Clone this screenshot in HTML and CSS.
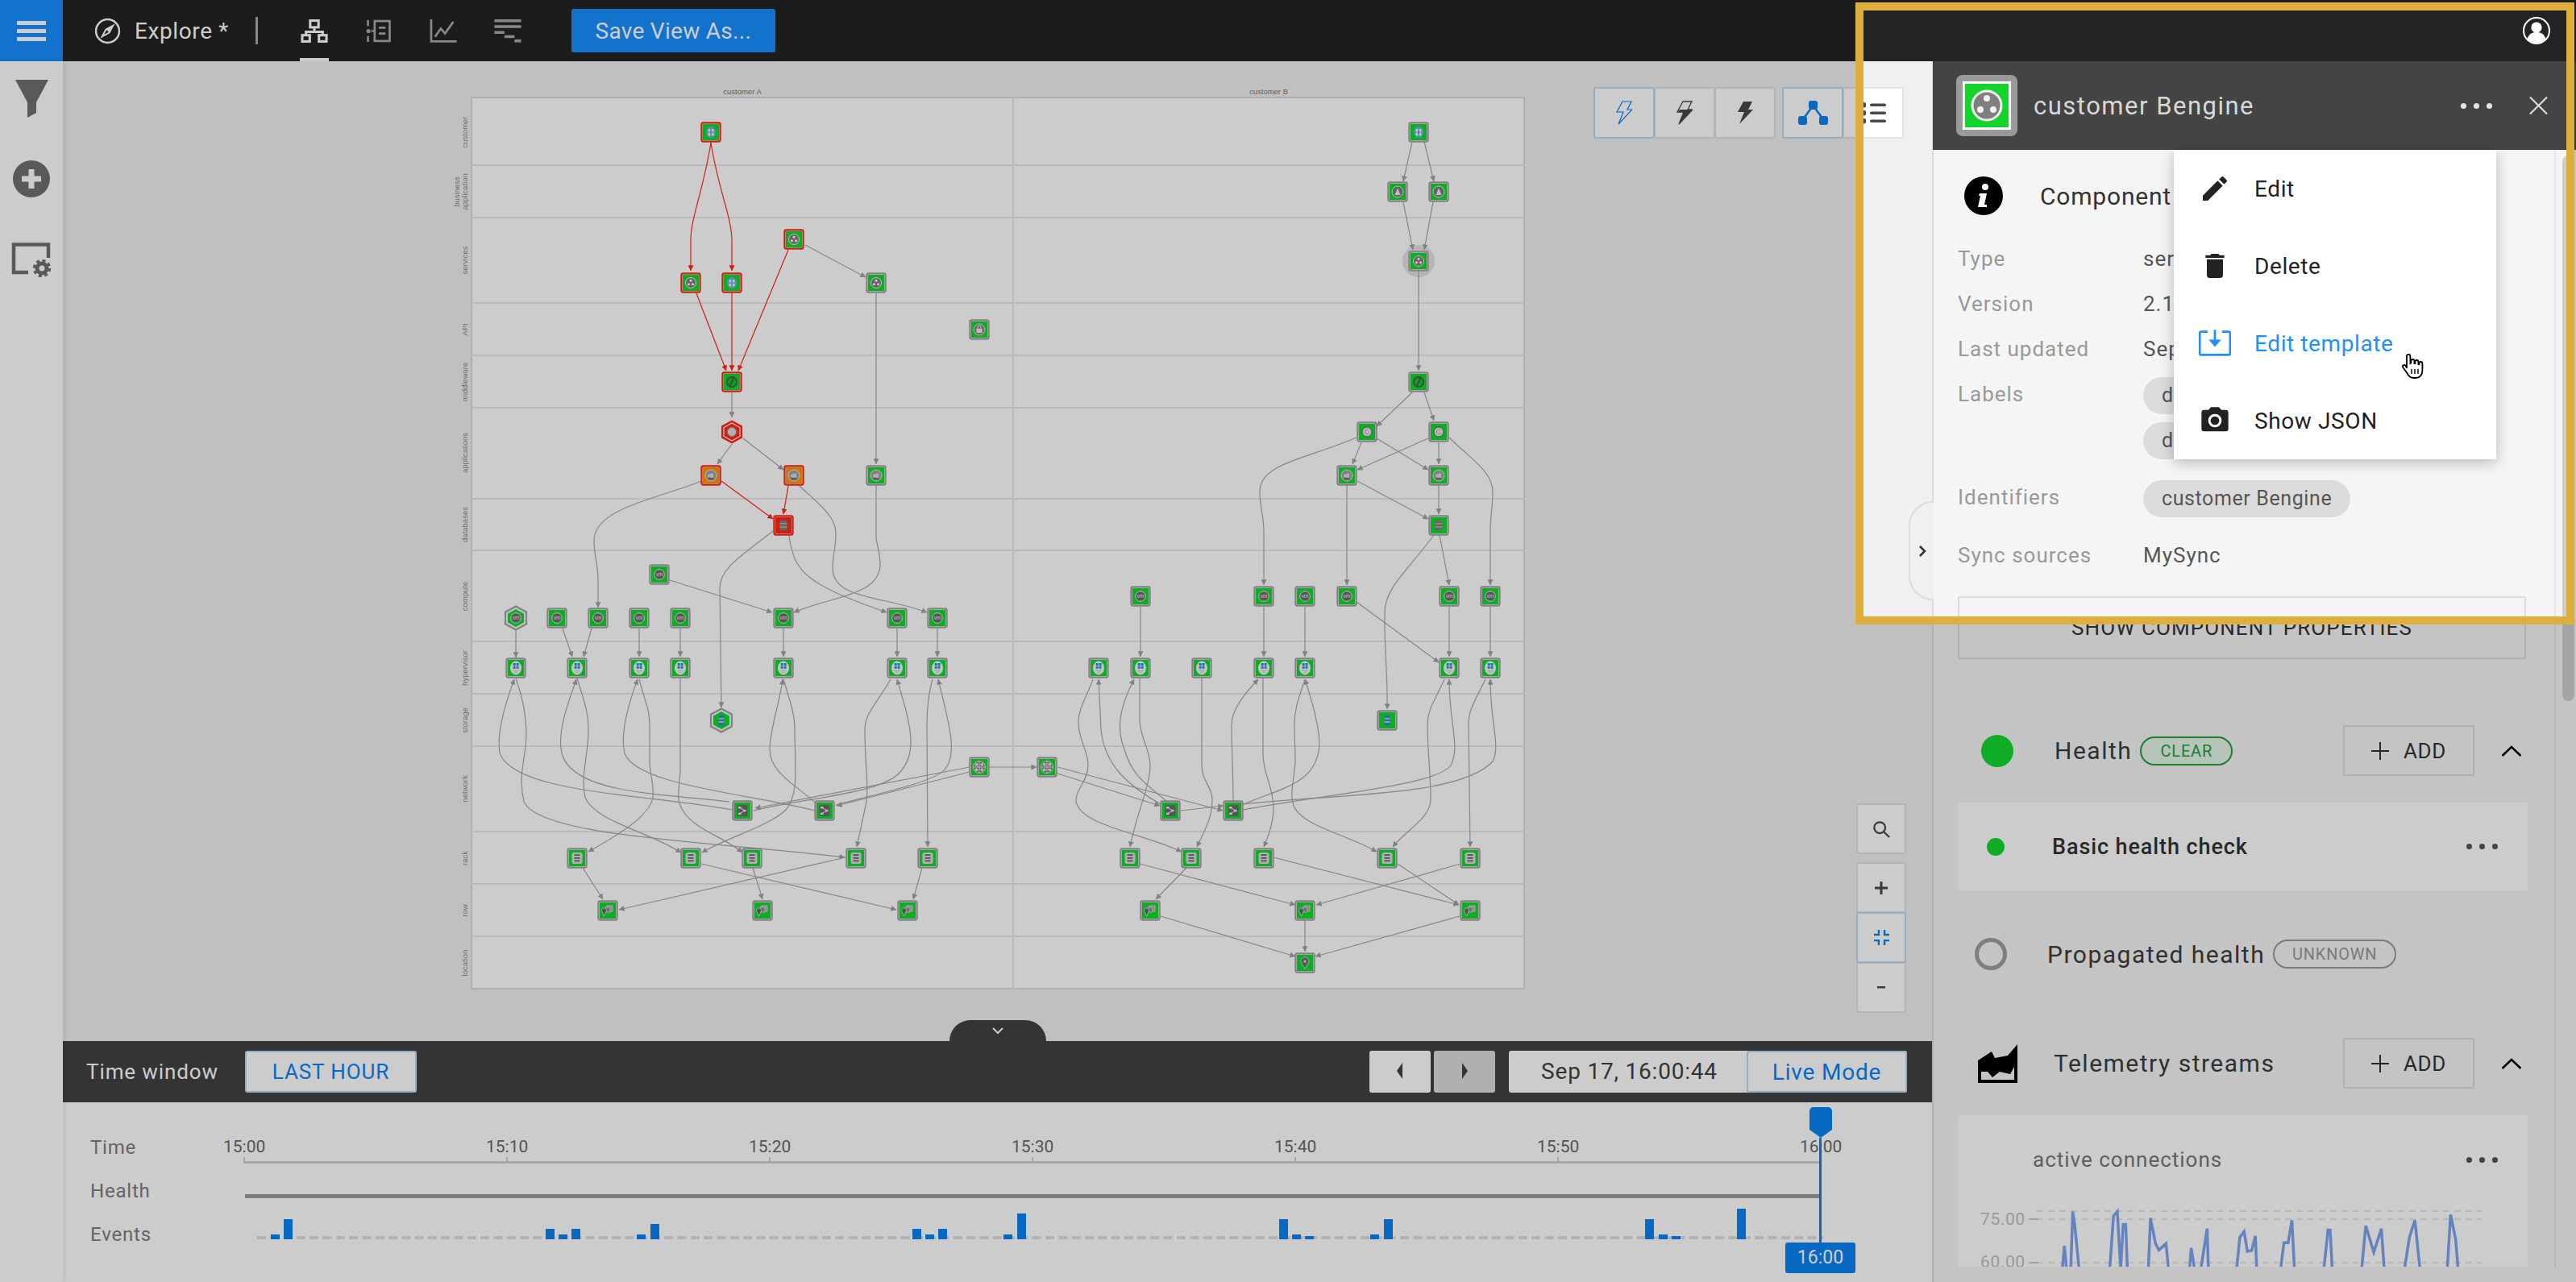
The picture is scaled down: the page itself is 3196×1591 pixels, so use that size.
FILE: index.html
```html
<!DOCTYPE html>
<html lang="en">
<head>
    <meta charset="UTF-8">
    <title>Explore - customer Bengine</title>
    <link rel="stylesheet" href="styles.css">
</head>
<body>
<div class="app">
    <header class="topbar">
        <button class="menu-btn"><span></span><span></span><span></span></button>
        <svg class="compass" viewBox="0 0 32 32"><circle cx="16" cy="16" r="14" fill="none" stroke="#fff" stroke-width="2.4"/><path d="M22.5 9.5L18 18l-8.5 4.5L14 14z" fill="none" stroke="#fff" stroke-width="2"/><path d="M22.5 9.5L18 18l-4-4z" fill="#fff"/></svg>
        <span class="view-name">Explore *</span>
        <span class="view-sep"></span>
        <nav class="view-tabs">
            <a class="tab active"><svg viewBox="0 0 32 28" fill="none" stroke="currentColor" stroke-width="3"><rect x="11" y="1.5" width="10" height="8"/><path d="M16 10v5M6 19v-4h20v4"/><rect x="1.5" y="19" width="9" height="7.5"/><rect x="21.5" y="19" width="9" height="7.5"/></svg></a>
            <a class="tab"><svg viewBox="0 0 30 28" fill="none" stroke="currentColor" stroke-width="2.6"><path d="M2 1v7M2 20v7"/><circle cx="2.5" cy="14" r="2.5" fill="currentColor" stroke="none"/><path d="M10 2h18v24H10z"/><path d="M10 14H6M15 10h8M15 17h8"/></svg></a>
            <a class="tab"><svg viewBox="0 0 32 28" fill="none" stroke="currentColor" stroke-width="2.6"><path d="M1.5 0v26.5H32"/><path d="M6 21l7-10 5 6L28 3"/></svg></a>
            <a class="tab"><svg viewBox="0 0 32 28" fill="currentColor"><rect width="32" height="3.4"/><rect y="7" width="32" height="3.4"/><rect y="14" width="12" height="3.4"/><rect x="12" y="19" width="12" height="3.4"/><rect x="24" y="24" width="8" height="3.6"/></svg></a>
        </nav>
        <button class="save-btn">Save View As...</button>
        <svg class="avatar" viewBox="0 0 34 34"><circle cx="17" cy="17" r="16" fill="none" stroke="#fff" stroke-width="2"/><circle cx="17" cy="13" r="6.6" fill="#fff"/><path d="M5.5 28c1.5-7 6-9 11.5-9s10 2 11.5 9a16 16 0 0 1-23 0z" fill="#fff"/></svg>
    </header>

    <div class="main">
        <aside class="rail">
            <svg class="rail-funnel" viewBox="17 99 41 47"><path d="M17 99h41L43 127v13l-11 6v-19z" fill="#707070"/></svg>
            <svg class="rail-add" viewBox="0 0 46 46"><circle cx="23" cy="23" r="23" fill="#707070"/><path d="M23 11v24M11 23h24" stroke="#fff" stroke-width="7"/></svg>
            <svg class="rail-view" viewBox="0 0 50 44"><path d="M21 38H3V3.5h43V20" fill="none" stroke="#707070" stroke-width="4.5"/><circle cx="38" cy="33" r="6" fill="none" stroke="#707070" stroke-width="5"/><circle cx="38" cy="33" r="9.5" fill="none" stroke="#707070" stroke-width="3.5" stroke-dasharray="4 3.5"/></svg>
        </aside>

        <section class="center">
            <div class="stage">
                <svg class="graph" viewBox="78 76 2319 1216">
                    <defs>
                        <marker id="arr" viewBox="0 0 10 10" refX="9.5" refY="5" markerWidth="7" markerHeight="7" markerUnits="userSpaceOnUse" orient="auto"><path d="M0 0L10 5L0 10z" fill="#a2a2a2"/></marker>
                        <marker id="arr-red" viewBox="0 0 10 10" refX="9.5" refY="5" markerWidth="7" markerHeight="7" markerUnits="userSpaceOnUse" orient="auto"><path d="M0 0L10 5L0 10z" fill="#ff2a15"/></marker>

                        <g id="box-g"><rect x="-11.6" y="-11.6" width="23.2" height="23.2" rx="2" fill="#f6f6f6" stroke="#a4a4a4" stroke-width="2.2"/><rect x="-10" y="-10" width="20" height="20" fill="#12d92f"/></g>
                        <g id="box-r"><rect x="-11.6" y="-11.6" width="23.2" height="23.2" rx="2" fill="#f6f6f6" stroke="#ff2a15" stroke-width="2.2"/><rect x="-10" y="-10" width="20" height="20" fill="#12d92f"/></g>
                        <g id="box-o"><rect x="-11.6" y="-11.6" width="23.2" height="23.2" rx="2" fill="#f6f6f6" stroke="#ff2a15" stroke-width="2.2"/><rect x="-10" y="-10" width="20" height="20" fill="#ff9410"/></g>
                        <g id="box-x"><rect x="-11.6" y="-11.6" width="23.2" height="23.2" rx="2" fill="#f6f6f6" stroke="#ff2a15" stroke-width="2.2"/><rect x="-10" y="-10" width="20" height="20" fill="#ff2a15"/></g>
                        <path id="hexa" d="M0-14.5L13 -7.5V7.5L0 14.5L-13 7.5V-7.5z"/>
                        <path id="hexb" d="M0-11L10 -5.5V5.5L0 11L-10 5.5V-5.5z"/>

                        <g id="i-dots"><circle r="6.5" fill="#808080" stroke="#f0f0f0"/><circle cy="-2.8" r="1.5" fill="#fff"/><circle cx="-2.6" cy="1.8" r="1.5" fill="#fff"/><circle cx="2.6" cy="1.8" r="1.5" fill="#fff"/></g>
                        <g id="i-globe"><ellipse rx="6" ry="7" fill="#6db4e2"/><path d="M-3.5-4h2.5v3.5h-2.5zM1-4h2.5v3.5H1zM-3.5 1h2.5v3.5h-2.5zM1 1h2.5v3.5H1z" fill="#eef4f8"/></g>
                        <g id="i-a"><circle r="7" fill="#7d7d7d" stroke="#e8e8e8"/><path d="M0-4.5L3.5 4h-7z" fill="#eee"/></g>
                        <g id="i-lock"><circle r="7" fill="#8a8a8a" stroke="#e0e0e0"/><rect x="-3.5" y="-1" width="7" height="5" fill="#eee"/><path d="M-2-1v-2a2 2 0 0 1 4 0v2" fill="none" stroke="#eee"/></g>
                        <g id="i-compass"><circle r="6.2" fill="#12c42c" stroke="#5a5a5a" stroke-width="2"/><path d="M2.5-5.5L-2.5 5.5" stroke="#444" stroke-width="1.2"/></g>
                        <g id="i-cog"><circle r="6" fill="#e4e4e4" stroke="#666"/><path d="M1.5-3a3 3 0 1 0 1.5 4.5" fill="none" stroke="#aaa"/></g>
                        <g id="i-cam"><circle r="7" fill="#a2a2a2" stroke="#e8e8e8"/><path d="M-4-1L3-3V3l-7-1z" fill="#dadada"/><ellipse cy="4.2" rx="4" ry="1.3" fill="#707070"/></g>
                        <g id="i-db"><rect x="-4.5" y="-6.5" width="9" height="13" rx="3" fill="#808080"/><path d="M-4.5-2.2H4.5M-4.5 2H4.5" stroke="#ccc"/></g>
                        <g id="i-dbc"><rect x="-3.5" y="-6.5" width="7" height="13" rx="2.5" fill="#2f8fc4"/><path d="M-3.5-2.2H3.5M-3.5 2H3.5" stroke="#ddd" stroke-width="1.3"/></g>
                        <g id="i-vm"><circle r="6.3" fill="#6c6c6c" stroke="#e8e8e8"/><text class="vm-text" y="2.2" text-anchor="middle">vm</text></g>
                        <g id="i-win"><ellipse rx="7" ry="8.5" fill="#f6f6f6"/><path d="M-3.3-6h3v3h-3zM.6-6h3v3h-3zM-3.3-2.2h3v3h-3zM.6-2.2h3v3h-3z" fill="#1796de"/><path d="M-4 3.3H4M-2 5.3H2" stroke="#bbb" stroke-width=".8"/></g>
                        <g id="i-net"><circle r="7.5" fill="#808080" stroke="#e4e4e4"/><path d="M0-7.5V7.5M-7.5 0H7.5" stroke="#e4e4e4"/><circle cx="-3.3" cy="-3.3" r="1.9" fill="#e4e4e4"/><circle cx="3.3" cy="-3.3" r="1.9" fill="#e4e4e4"/><circle cx="-3.3" cy="3.3" r="1.9" fill="#e4e4e4"/><circle cx="3.3" cy="3.3" r="1.9" fill="#e4e4e4"/></g>
                        <g id="i-share"><rect x="-6.5" y="-7" width="13" height="14" rx="2" fill="#6c6c6c"/><path d="M-3-3.5L3 0L-3 3.5" fill="none" stroke="#eee"/><rect x="-5" y="-5" width="3.5" height="2.5" fill="#eee"/><rect x="1" y="-1.2" width="3.5" height="2.5" fill="#eee"/><rect x="-5" y="2.6" width="3.5" height="2.5" fill="#eee"/></g>
                        <g id="i-rack"><rect x="-6.5" y="-7" width="13" height="14" rx="2.5" fill="#dcdcdc"/><path d="M-3.5-3.8H3.5M-3.5-.2H3.5M-3.5 3.4H3.5" stroke="#666" stroke-width="1.7"/></g>
                        <g id="i-row"><path d="M-1-6h7V1h-7z" fill="#a8a8a8" stroke="#e4e4e4" stroke-width=".8"/><path d="M-3-4h6V2h-6z" fill="#8c8c8c" stroke="#e4e4e4" stroke-width=".8"/><path d="M-4.5 7L-7 1.5a3 3 0 1 1 5 0z" fill="#666" stroke="#e4e4e4" stroke-width=".8"/></g>
                        <g id="i-loc"><path d="M0 7.5L-4.5 0a5 5 0 1 1 9 0z" fill="#707070" stroke="#e4e4e4" stroke-width=".8"/><circle cy="-2" r="1.6" fill="#e4e4e4"/></g>

                        <g id="n-dots"><use href="#box-g"/><use href="#i-dots"/></g>
                        <g id="n-dots-r"><use href="#box-r"/><use href="#i-dots"/></g>
                        <g id="n-globe"><use href="#box-g"/><use href="#i-globe"/></g>
                        <g id="n-globe-r"><use href="#box-r"/><use href="#i-globe"/></g>
                        <g id="n-a"><use href="#box-g"/><use href="#i-a"/></g>
                        <g id="n-lock"><use href="#box-g"/><use href="#i-lock"/></g>
                        <g id="n-compass"><use href="#box-g"/><use href="#i-compass"/></g>
                        <g id="n-compass-r"><use href="#box-r"/><use href="#i-compass"/></g>
                        <g id="n-cog"><use href="#box-g"/><use href="#i-cog"/></g>
                        <g id="n-cam"><use href="#box-g"/><use href="#i-cam"/></g>
                        <g id="n-cam-o"><use href="#box-o"/><use href="#i-cam"/></g>
                        <g id="n-db"><use href="#box-g"/><use href="#i-db"/></g>
                        <g id="n-db-x"><use href="#box-x"/><use href="#i-db"/></g>
                        <g id="n-dbc"><use href="#box-g"/><use href="#i-dbc"/></g>
                        <g id="n-vm"><use href="#box-g"/><use href="#i-vm"/></g>
                        <g id="n-win"><use href="#box-g"/><use href="#i-win"/></g>
                        <g id="n-net"><use href="#box-g"/><use href="#i-net"/></g>
                        <g id="n-share"><use href="#box-g"/><use href="#i-share"/></g>
                        <g id="n-rack"><use href="#box-g"/><use href="#i-rack"/></g>
                        <g id="n-row"><use href="#box-g"/><use href="#i-row"/></g>
                        <g id="n-loc"><use href="#box-g"/><use href="#i-loc"/></g>
                        <g id="n-hex-r"><use href="#hexa" fill="#ff2a15"/><use href="#hexb" fill="none" stroke="#f6f6f6" stroke-width="1.2"/><circle r="5.5" fill="#ddd" stroke="#999"/></g>
                        <g id="n-hex-vm"><use href="#hexa" fill="#f6f6f6" stroke="#a4a4a4" stroke-width="2.2"/><use href="#hexb" fill="#12d92f"/><use href="#i-vm"/></g>
                        <g id="n-hex-db"><use href="#hexa" fill="#f6f6f6" stroke="#a4a4a4" stroke-width="2.2"/><use href="#hexb" fill="#12d92f"/><use href="#i-dbc"/></g>
                    </defs>

                    <rect class="plane" x="585" y="121" width="1306" height="1106"/>
                    <g class="lines">
                        <path d="M585 205H1891M585 270H1891M585 376H1891M585 441H1891M585 506H1891M585 619H1891M585 683H1891M585 796H1891M585 861H1891M585 926H1891M585 1032H1891M585 1097H1891M585 1162H1891"/>
                        <path d="M1257 121V1227"/>
                    </g>

                    <text class="col-title" x="921" y="117">customer A</text>
                    <text class="col-title" x="1574" y="117">customer B</text>
                    <g class="row-titles">
                        <text transform="translate(580 164) rotate(-90)">customer</text>
                        <text transform="translate(570 238) rotate(-90)">business</text>
                        <text transform="translate(580 238) rotate(-90)">application</text>
                        <text transform="translate(580 323) rotate(-90)">services</text>
                        <text transform="translate(580 409) rotate(-90)">API</text>
                        <text transform="translate(580 474) rotate(-90)">middleware</text>
                        <text transform="translate(580 562) rotate(-90)">applications</text>
                        <text transform="translate(580 651) rotate(-90)">databases</text>
                        <text transform="translate(580 740) rotate(-90)">compute</text>
                        <text transform="translate(580 829) rotate(-90)">hypervisor</text>
                        <text transform="translate(580 894) rotate(-90)">storage</text>
                        <text transform="translate(580 979) rotate(-90)">network</text>
                        <text transform="translate(580 1065) rotate(-90)">rack</text>
                        <text transform="translate(580 1130) rotate(-90)">row</text>
                        <text transform="translate(580 1195) rotate(-90)">location</text>
                    </g>

                    <circle class="halo" cx="1760" cy="324" r="20"/>

                    <g class="edges red" marker-end="url(#arr-red)">
                        <path d="M882 177C873 235 857 270 857 298L857 336"/>
                        <path d="M882 177C891 235 908 270 908 298L908 336"/>
                        <path d="M864 364L901 460"/>
                        <path d="M908 364V460"/>
                        <path d="M978 310L916 460"/>
                        <path d="M895 597L959 644"/>
                        <path d="M978 603L972 638"/>
                    </g>
                    <g class="edges" marker-end="url(#arr)">
                        <path d="M999 304L1074 344"/>
                        <path d="M1087 364V576"/>
                        <path d="M908 487V518"/>
                        <path d="M908 551L890 576"/>
                        <path d="M922 544L972 583"/>
                        <path d="M870 597C820 618 737 630 737 671C737 690 742 700 742 720V754"/>
                        <path d="M991 602C1015 625 1037 640 1037 662C1037 680 1033 690 1033 705C1033 745 1100 740 1150 760"/>
                        <path d="M1087 602V665C1087 675 1092 685 1092 700C1092 740 1030 740 985 760"/>
                        <path d="M959 659C920 690 893 705 893 730L895 878"/>
                        <path d="M979 665C985 710 1000 725 1100 760"/>
                        <path d="M831 720L958 760"/>
                        <path d="M640 781V816"/>
                        <path d="M698 780L710 815"/>
                        <path d="M734 780L724 815"/>
                        <path d="M793 780V815"/>
                        <path d="M844 780V815"/>
                        <path d="M972 780V815"/>
                        <path d="M1113 780V815"/>
                        <path d="M1163 780V815"/>

                        <path d="M909 1005C800 985 640 985 620 935C615 905 632 860 638 843"/>
                        <path d="M640 842C650 870 653 890 653 910C653 940 642 960 650 995C670 1040 900 1045 1048 1064"/>
                        <path d="M905 995C820 985 710 985 697 935C690 905 710 860 715 843"/>
                        <path d="M716 842C725 870 730 885 730 905C730 940 720 960 726 990C740 1020 800 1030 845 1058"/>
                        <path d="M1011 1006C930 985 790 975 775 935C768 905 785 860 791 843"/>
                        <path d="M793 843C800 870 806 880 806 900V946C806 960 812 975 810 990C805 1015 760 1040 730 1057"/>
                        <path d="M844 842V958C842 985 838 995 850 1010C865 1030 900 1040 921 1058"/>
                        <path d="M1013 998C990 975 955 960 955 930C955 905 968 870 971 843"/>
                        <path d="M972 843C980 870 986 885 986 905C986 950 992 985 975 1005C955 1025 900 1040 871 1058"/>
                        <path d="M1105 843C1090 870 1073 885 1073 905C1073 950 1078 975 1075 995L1063 1051"/>
                        <path d="M935 1006C1000 990 1090 985 1115 960C1140 935 1130 900 1113 843"/>
                        <path d="M1157 843C1152 860 1150 880 1150 900L1151 1051"/>
                        <path d="M1037 999C1090 985 1160 970 1172 955C1190 935 1175 890 1164 843"/>
                        <path d="M1203 952L937 1003"/>
                        <path d="M1203 958L1038 1000"/>
                        <path d="M1228 952H1286"/>

                        <path d="M723 1077L748 1116"/>
                        <path d="M870 1072L1112 1129"/>
                        <path d="M934 1077L946 1116"/>
                        <path d="M1049 1064L768 1129"/>
                        <path d="M1144 1077L1133 1116"/>

                        <path d="M1752 176L1741 225"/>
                        <path d="M1767 176L1779 225"/>
                        <path d="M1741 251L1753 310"/>
                        <path d="M1778 251L1767 310"/>
                        <path d="M1760 336V460"/>
                        <path d="M1752 487L1708 529"/>
                        <path d="M1767 487L1779 522"/>
                        <path d="M1689 549L1678 576"/>
                        <path d="M1708 544L1772 583"/>
                        <path d="M1785 549V576"/>
                        <path d="M1772 544L1684 583"/>
                        <path d="M1671 602V726"/>
                        <path d="M1785 602V638"/>
                        <path d="M1684 597L1772 644"/>
                        <path d="M1683 543C1620 570 1563 575 1563 610C1563 630 1568 640 1568 660V726"/>
                        <path d="M1798 543C1825 570 1852 585 1852 610C1852 630 1849 640 1849 660V726"/>
                        <path d="M1786 664L1798 726"/>
                        <path d="M1779 664C1745 710 1718 730 1718 760C1717 800 1722 840 1721 880"/>
                        <path d="M1415 753V815"/>
                        <path d="M1568 753V815"/>
                        <path d="M1619 753V815"/>
                        <path d="M1683 747L1785 822"/>
                        <path d="M1798 753V815"/>
                        <path d="M1849 753V815"/>

                        <path d="M1356 843C1346 870 1338 880 1338 896C1338 920 1350 930 1350 950C1350 970 1330 985 1336 998C1345 1025 1420 1035 1466 1057"/>
                        <path d="M1440 998C1400 975 1370 950 1366 905L1363 843"/>
                        <path d="M1447 994C1425 975 1405 965 1395 930C1385 905 1388 880 1407 843"/>
                        <path d="M1414 841V893C1414 915 1427 930 1427 950C1427 975 1410 1010 1402 1051"/>
                        <path d="M1491 841V946C1490 970 1504 975 1504 992C1504 1015 1495 1030 1485 1051"/>
                        <path d="M1530 994C1530 960 1528 930 1528 900C1528 880 1545 860 1561 843"/>
                        <path d="M1567 841V931C1566 960 1580 975 1580 1003C1580 1020 1575 1035 1568 1051"/>
                        <path d="M1619 843C1610 870 1606 880 1606 900C1606 920 1607 930 1607 946C1605 970 1600 985 1605 1000C1615 1025 1670 1035 1708 1057"/>
                        <path d="M1543 998C1600 975 1633 970 1637 925C1637 900 1628 870 1619 843"/>
                        <path d="M1792 843C1780 870 1771 880 1771 900C1771 930 1775 960 1775 992C1775 1015 1745 1030 1728 1051"/>
                        <path d="M1542 1005C1650 985 1780 975 1800 950C1812 925 1798 900 1798 843"/>
                        <path d="M1843 843C1830 870 1822 880 1822 900L1824 1051"/>
                        <path d="M1542 998C1650 985 1810 990 1852 945C1862 925 1849 900 1849 843"/>
                        <path d="M1312 960L1439 1000"/>
                        <path d="M1312 952L1517 1006"/>
                        <path d="M1465 1006L1518 1000"/>

                        <path d="M1414 1072L1607 1123"/>
                        <path d="M1472 1077L1434 1116"/>
                        <path d="M1580 1064L1810 1123"/>
                        <path d="M1734 1072L1810 1123"/>
                        <path d="M1812 1072L1633 1123"/>
                        <path d="M1440 1137L1607 1187"/>
                        <path d="M1619 1142V1181"/>
                        <path d="M1811 1137L1632 1187"/>
                    </g>

                    <g class="nodes">
                        <use href="#n-globe-r" x="882" y="164"/>
                        <use href="#n-dots-r" x="857" y="351"/>
                        <use href="#n-globe-r" x="908" y="351"/>
                        <use href="#n-dots-r" x="985" y="297"/>
                        <use href="#n-dots" x="1087" y="351"/>
                        <use href="#n-lock" x="1215" y="409"/>
                        <use href="#n-compass-r" x="908" y="474"/>
                        <use href="#n-hex-r" x="908" y="536"/>
                        <use href="#n-cam-o" x="882" y="590"/>
                        <use href="#n-cam-o" x="985" y="590"/>
                        <use href="#n-cam" x="1087" y="590"/>
                        <use href="#n-db-x" x="972" y="652"/>

                        <use href="#n-vm" x="818" y="713"/>
                        <use href="#n-hex-vm" x="640" y="767"/>
                        <use href="#n-vm" x="691" y="767"/>
                        <use href="#n-vm" x="742" y="767"/>
                        <use href="#n-vm" x="793" y="767"/>
                        <use href="#n-vm" x="844" y="767"/>
                        <use href="#n-vm" x="972" y="767"/>
                        <use href="#n-vm" x="1113" y="767"/>
                        <use href="#n-vm" x="1163" y="767"/>

                        <use href="#n-win" x="640" y="829"/>
                        <use href="#n-win" x="716" y="829"/>
                        <use href="#n-win" x="793" y="829"/>
                        <use href="#n-win" x="844" y="829"/>
                        <use href="#n-win" x="972" y="829"/>
                        <use href="#n-win" x="1113" y="829"/>
                        <use href="#n-win" x="1163" y="829"/>

                        <use href="#n-hex-db" x="895" y="894"/>
                        <use href="#n-net" x="1215" y="952"/>
                        <use href="#n-net" x="1299" y="952"/>
                        <use href="#n-share" x="921" y="1006"/>
                        <use href="#n-share" x="1023" y="1006"/>

                        <use href="#n-rack" x="716" y="1065"/>
                        <use href="#n-rack" x="857" y="1065"/>
                        <use href="#n-rack" x="933" y="1065"/>
                        <use href="#n-rack" x="1062" y="1065"/>
                        <use href="#n-rack" x="1151" y="1065"/>
                        <use href="#n-row" x="754" y="1130"/>
                        <use href="#n-row" x="946" y="1130"/>
                        <use href="#n-row" x="1126" y="1130"/>

                        <use href="#n-globe" x="1760" y="164"/>
                        <use href="#n-a" x="1734" y="238"/>
                        <use href="#n-a" x="1785" y="238"/>
                        <use href="#n-dots" x="1760" y="324"/>
                        <use href="#n-compass" x="1760" y="474"/>
                        <use href="#n-cog" x="1696" y="536"/>
                        <use href="#n-cog" x="1785" y="536"/>
                        <use href="#n-cam" x="1671" y="590"/>
                        <use href="#n-cam" x="1785" y="590"/>
                        <use href="#n-db" x="1785" y="652"/>

                        <use href="#n-vm" x="1415" y="740"/>
                        <use href="#n-vm" x="1568" y="740"/>
                        <use href="#n-vm" x="1619" y="740"/>
                        <use href="#n-vm" x="1671" y="740"/>
                        <use href="#n-vm" x="1798" y="740"/>
                        <use href="#n-vm" x="1849" y="740"/>

                        <use href="#n-win" x="1363" y="829"/>
                        <use href="#n-win" x="1415" y="829"/>
                        <use href="#n-win" x="1491" y="829"/>
                        <use href="#n-win" x="1568" y="829"/>
                        <use href="#n-win" x="1619" y="829"/>
                        <use href="#n-win" x="1798" y="829"/>
                        <use href="#n-win" x="1849" y="829"/>

                        <use href="#n-dbc" x="1721" y="894"/>
                        <use href="#n-share" x="1452" y="1006"/>
                        <use href="#n-share" x="1530" y="1006"/>

                        <use href="#n-rack" x="1402" y="1065"/>
                        <use href="#n-rack" x="1478" y="1065"/>
                        <use href="#n-rack" x="1568" y="1065"/>
                        <use href="#n-rack" x="1721" y="1065"/>
                        <use href="#n-rack" x="1824" y="1065"/>
                        <use href="#n-row" x="1427" y="1130"/>
                        <use href="#n-row" x="1619" y="1130"/>
                        <use href="#n-row" x="1824" y="1130"/>
                        <use href="#n-loc" x="1619" y="1195"/>
                    </g>
                </svg>

                <div class="graph-tools">
                    <div class="btn-group">
                        <button class="tool active"><svg viewBox="0 0 20 30"><path d="M8 1h11l-5 10h6L3 29l6-15H1z" fill="none" stroke="currentColor" stroke-width="1.2"/></svg></button>
                        <button class="tool"><svg viewBox="0 0 20 30"><path d="M8 1h11l-5 10h6L3 29l6-15H1z" fill="none" stroke="currentColor" stroke-width="1.3"/><path d="M4.5 11H20L3 29l6-15H1z" fill="currentColor"/></svg></button>
                        <button class="tool"><svg viewBox="0 0 20 30"><path d="M8 1h11l-5 10h6L3 29l6-15H1z" fill="currentColor"/></svg></button>
                    </div>
                    <div class="btn-group">
                        <button class="tool active"><svg class="tool-net" viewBox="0 0 37 30" fill="currentColor"><path d="M18.5 6L6 23M18.5 6L31 23" stroke="currentColor" stroke-width="2.5"/><rect x="13" y="0" width="11" height="11" rx="3"/><rect x="0" y="19" width="11" height="11" rx="3"/><rect x="26" y="19" width="11" height="11" rx="3"/></svg></button>
                        <button class="tool"><svg class="tool-list" viewBox="0 0 32 28" fill="currentColor"><rect x="0" y="1" width="7" height="6.5" rx="2"/><rect x="0" y="11" width="7" height="6.5" rx="2"/><rect x="0" y="21" width="7" height="6.5" rx="2"/><rect x="12" y="2.5" width="20" height="3.4" rx="1.7"/><rect x="12" y="12.5" width="20" height="3.4" rx="1.7"/><rect x="12" y="22.5" width="20" height="3.4" rx="1.7"/></svg></button>
                    </div>
                </div>

                <div class="zoom-tools">
                    <button class="tool square"><svg class="ic-search" viewBox="0 0 24 24" fill="none" stroke="currentColor" stroke-width="2.4"><circle cx="10" cy="10" r="7.5"/><path d="M15.5 15.5L23 23"/></svg></button>
                    <div class="btn-stack">
                        <button class="tool square"><svg class="ic-plus" viewBox="0 0 16 16" fill="currentColor"><rect y="6.5" width="16" height="3"/><rect x="6.500" width="3" height="16"/></svg></button>
                        <button class="tool square active"><svg class="ic-fit" viewBox="0 0 20 20" fill="currentColor"><path d="M5 0h2.500v7.500H0V5h5zM12.500 0H15v5h5v2.500h-7.500zM0 12.500h7.500V20H5v-5H0zM12.500 12.500H20V15h-5v5h-2.500z"/></svg></button>
                        <button class="tool square"><svg class="ic-minus" viewBox="0 0 10 3" fill="currentColor"><rect width="10" height="2.5"/></svg></button>
                    </div>
                </div>

                <button class="timeline-toggle"><svg viewBox="0 0 14 8"><path d="M1 1l6 6 6-6" fill="none" stroke="#fff" stroke-width="2"/></svg></button>
            </div>

            <div class="time-bar">
                <span class="time-label">Time window</span>
                <button class="bar-btn blue last-hour">LAST HOUR</button>
                <div class="pager">
                    <button class="pager-btn"><svg viewBox="0 0 8 20"><path d="M7 0v20L0 10z"/></svg></button>
                    <button class="pager-btn hover"><svg viewBox="0 0 8 20"><path d="M1 0v20l7-10z"/></svg></button>
                </div>
                <div class="now-box">
                    <span class="now-date">Sep 17, 16:00:44</span>
                    <button class="bar-btn blue live">Live Mode</button>
                </div>
            </div>

            <div class="timeline">
                <div class="tl-label">Time</div>
                <div class="tl-axis">
                    <div class="tick"><span>15:00</span></div>
                    <div class="tick"><span>15:10</span></div>
                    <div class="tick"><span>15:20</span></div>
                    <div class="tick"><span>15:30</span></div>
                    <div class="tick"><span>15:40</span></div>
                    <div class="tick"><span>15:50</span></div>
                    <div class="tick last"><span>16:00</span></div>
                </div>
                <div class="tl-label">Health</div>
                <div class="tl-health"><div class="health-bar"></div></div>
                <div class="tl-label">Events</div>
                <svg class="tl-events" viewBox="302 1505 1960 54">
                    <path class="event-slots" d="M319 1536H2262"/>
                    <g class="event-bars">
                        <rect x="336" y="1532" width="11" height="6"/><rect x="352" y="1513" width="11" height="25"/>
                        <rect x="677" y="1525" width="11" height="13"/><rect x="693" y="1532" width="11" height="6"/><rect x="709" y="1525" width="11" height="13"/>
                        <rect x="790" y="1532" width="11" height="6"/><rect x="807" y="1519" width="11" height="19"/>
                        <rect x="1132" y="1525" width="11" height="13"/><rect x="1148" y="1532" width="11" height="6"/><rect x="1164" y="1525" width="11" height="13"/>
                        <rect x="1245" y="1532" width="11" height="6"/><rect x="1262" y="1506" width="11" height="32"/>
                        <rect x="1587" y="1513" width="11" height="25"/><rect x="1603" y="1532" width="11" height="6"/><rect x="1619" y="1534" width="11" height="4"/>
                        <rect x="1700" y="1532" width="11" height="6"/><rect x="1717" y="1513" width="11" height="25"/>
                        <rect x="2041" y="1513" width="11" height="25"/><rect x="2058" y="1532" width="11" height="6"/><rect x="2074" y="1534" width="11" height="4"/>
                        <rect x="2155" y="1500" width="11" height="38"/>
                    </g>
                </svg>
                <div class="slider">
                    <svg class="slider-handle" viewBox="0 0 28 38"><path d="M5 0h18a5 5 0 0 1 5 5v23L14 38 0 28V5a5 5 0 0 1 5-5z"/></svg>
                    <div class="slider-line"></div>
                    <div class="slider-time">16:00</div>
                </div>
            </div>
        </section>

        <aside class="panel">
            <div class="panel-handle"><svg viewBox="0 0 10 16"><path d="M2 2l6 6-6 6" fill="none" stroke="#333" stroke-width="2.5"/></svg></div>
            <div class="panel-head">
                <div class="comp-icon"><div class="comp-green"><svg viewBox="0 0 40 40"><circle cx="20" cy="20" r="18" fill="#7f7f7f" stroke="#f2f2f2" stroke-width="3"/><circle cx="20" cy="11" r="4" fill="#f2f2f2"/><circle cx="12" cy="25" r="4" fill="#f2f2f2"/><circle cx="28" cy="25" r="4" fill="#f2f2f2"/></svg></div></div>
                <h2 class="comp-name">customer Bengine</h2>
                <button class="dots light"><i></i><i></i><i></i></button>
                <svg class="close-x" viewBox="0 0 24 24"><path d="M1 1l22 22M23 1L1 23" stroke="#dcdcdc" stroke-width="2.2"/></svg>
            </div>

            <div class="panel-scroll">
                <div class="section-title">
                    <svg class="info-icon" viewBox="0 0 48 48"><circle cx="24" cy="24" r="24" fill="#000"/><circle cx="26" cy="13" r="4" fill="#fff"/><path d="M19 21h9l-3 14h3v3H17l3-14h-2z" fill="#fff"/></svg>
                    <span>Component details</span>
                </div>
                <div class="info-grid">
                    <div class="info-key">Type</div><div class="info-val">service</div>
                    <div class="info-key">Version</div><div class="info-val">2.1.0</div>
                    <div class="info-key">Last updated</div><div class="info-val">Sep 17</div>
                    <div class="info-key">Labels</div><div class="chips"><span class="chip">demo</span><span class="chip">demo</span></div>
                    <div class="info-key">Identifiers</div><div class="chips"><span class="chip">customer Bengine</span></div>
                    <div class="info-key">Sync sources</div><div class="info-val">MySync</div>
                </div>
                <button class="show-props">SHOW COMPONENT PROPERTIES</button>

                <div class="sec-row health-row">
                    <span class="dot-big"></span>
                    <span class="sec-name">Health</span>
                    <span class="pill clear">CLEAR</span>
                    <button class="add-btn"><svg viewBox="0 0 22 22"><path d="M11 0v22M0 11h22" stroke="currentColor" stroke-width="2"/></svg>ADD</button>
                    <svg class="chev-up" viewBox="0 0 26 16"><path d="M1.5 14L13 3l11.5 11" fill="none" stroke="#000" stroke-width="2.5"/></svg>
                </div>
                <div class="card check-card">
                    <span class="dot-small"></span>
                    <span class="check-name">Basic health check</span>
                    <button class="dots"><i></i><i></i><i></i></button>
                </div>
                <div class="sec-row prop-row">
                    <span class="ring"></span>
                    <span class="sec-name">Propagated health</span>
                    <span class="pill unknown">UNKNOWN</span>
                </div>
                <div class="sec-row tele-row">
                    <svg class="tele-icon" viewBox="0 0 49 48"><path d="M0 20L17 9l4 8 16-3L49 0v48H0z" fill="#000"/><path d="M4 34h8l6 7 9-7 13 3 5-9v16H4z" fill="#f5f5f5"/></svg>
                    <span class="sec-name">Telemetry streams</span>
                    <button class="add-btn"><svg viewBox="0 0 22 22"><path d="M11 0v22M0 11h22" stroke="currentColor" stroke-width="2"/></svg>ADD</button>
                    <svg class="chev-up" viewBox="0 0 26 16"><path d="M1.5 14L13 3l11.5 11" fill="none" stroke="#000" stroke-width="2.5"/></svg>
                </div>
                <div class="card stream-card">
                    <div class="stream-head">
                        <span class="stream-name">active connections</span>
                        <button class="dots"><i></i><i></i><i></i></button>
                    </div>
                    <svg class="stream-chart" viewBox="2430 1495 707 120">
                        <path class="chart-grid" d="M2528 1504H3080M2528 1514H3080M2528 1568H3080"/>
                        <path class="chart-tick" d="M2518 1514H2530M2518 1568H2530"/>
                        <text class="chart-val" x="2458" y="1521">75.00</text>
                        <text class="chart-val" x="2458" y="1574">60.00</text>
                        <g transform="translate(2380 760) scale(.5208 .53)">
                            <path class="chart-line" vector-effect="non-scaling-stroke" d="M345 1540L350 1485L355 1540L365 1540L370 1405L375 1440L385 1540M458 1540L467 1415L476 1405L484 1540L490 1435L496 1435L500 1540M550 1540L555 1420L567 1480L575 1495L592 1480L598 1540M648 1540L652 1490L660 1540M675 1540L690 1445L693 1540M760 1540L768 1465L778 1452L786 1498L796 1496L805 1462L808 1540M865 1540L873 1478L883 1478L892 1425L898 1540M968 1540L978 1448L983 1448L988 1540M1058 1540L1068 1438L1087 1500L1105 1445L1112 1540M1160 1540L1172 1465L1185 1425L1197 1540M1262 1540L1270 1412L1282 1470L1288 1540"/>
                        </g>
                    </svg>
                </div>
            </div>
            <div class="scroll-track"><div class="scroll-thumb"></div></div>

            <div class="action-menu">
                <div class="menu-item"><svg viewBox="0 0 24 24"><path d="M3 17.25V21h3.75L17.81 9.94l-3.75-3.75L3 17.25zM20.71 7.04a1 1 0 0 0 0-1.41l-2.34-2.34a1 1 0 0 0-1.41 0l-1.83 1.83 3.75 3.75 1.83-1.83z"/></svg>Edit</div>
                <div class="menu-item"><svg viewBox="0 0 24 24"><path d="M6 19c0 1.1.9 2 2 2h8c1.1 0 2-.9 2-2V7H6v12zM19 4h-3.5l-1-1h-5l-1 1H5v2h14V4z"/></svg>Delete</div>
                <div class="menu-item hover"><svg viewBox="0 0 36 30"><path d="M10 2H3a2 2 0 0 0-2 2v22a2 2 0 0 0 2 2h30a2 2 0 0 0 2-2V4a2 2 0 0 0-2-2h-7" fill="none" stroke="currentColor" stroke-width="2.5"/><path d="M18 0v17" stroke="currentColor" stroke-width="2.5" fill="none"/><path d="M11 11l7 8 7-8z"/></svg>Edit template</div>
                <div class="menu-item"><svg viewBox="0 0 24 24"><path d="M9 2L7.17 4H4a2 2 0 0 0-2 2v12a2 2 0 0 0 2 2h16a2 2 0 0 0 2-2V6a2 2 0 0 0-2-2h-3.17L15 2H9zm3 15a5 5 0 1 1 0-10 5 5 0 0 1 0 10zm0-1.8a3.2 3.2 0 1 0 0-6.4 3.2 3.2 0 0 0 0 6.400z" fill-rule="evenodd"/></svg>Show JSON</div>
                <svg class="hand-cursor" viewBox="0 0 30 34"><path d="M8 20V5a2.2 2.2 0 0 1 4.400 0v9l1-.5V11a2 2 0 0 1 4 0v3l1 .2V12a2 2 0 0 1 4 0v3l1 .3V14a2 2 0 0 1 4 0v9c0 5-3 9-8 9h-3c-4 0-6-2-8-6l-5-7c-1.500-2 1-4 3-2.500z" fill="#fff" stroke="#000" stroke-width="1.800"/><path d="M14 21v6M18 21v6M22 21v6" stroke="#000" stroke-width="1.400"/></svg>
            </div>
        </aside>
    </div>
</div>
<div class="highlight"></div>
</body>
</html>
```
FILE: styles.css
```css
* {
    box-sizing: border-box;
}
html, body {
    margin: 0;
    height: 100%;
    overflow: hidden;
}
body {
    font-family: Roboto, "Noto Sans", sans-serif;
    background-color: #f0f0f0;
    color: #333;
}
button {
    font-family: inherit;
    cursor: pointer;
    padding: 0;
}
.app {
    display: flex;
    flex-direction: column;
    width: 3196px;
    height: 1591px;
}

/* top bar */
.topbar {
    flex: 0 0 76px;
    display: flex;
    align-items: center;
    background-color: #232323;
    color: #fff;
}
.menu-btn {
    flex: 0 0 78px;
    height: 76px;
    display: flex;
    flex-direction: column;
    align-items: center;
    justify-content: center;
    gap: 5px;
    border: none;
    background-color: #178fff;
}
.menu-btn span {
    display: block;
    width: 36px;
    height: 5px;
    background-color: #fff;
}
.compass {
    width: 33px;
    height: 33px;
    margin-left: 39px;
}
.view-name {
    margin-left: 17px;
    font-size: 28px;
    letter-spacing: 0.6px;
    white-space: nowrap;
}
.view-sep {
    width: 3px;
    height: 34px;
    margin-left: 33px;
    background-color: #aaa;
}
.view-tabs {
    display: flex;
    gap: 44px;
    margin-left: 52px;
    height: 76px;
}
.tab {
    position: relative;
    display: flex;
    align-items: center;
    width: 36px;
    color: #aaa;
}
.tab svg {
    width: 36px;
    height: 29px;
}
.tab.active {
    color: #fff;
}
.tab.active::after {
    content: "";
    position: absolute;
    left: 0;
    right: 0;
    bottom: 0;
    height: 4px;
    background-color: #fff;
}
.save-btn {
    margin-left: 61px;
    width: 253px;
    height: 54px;
    border: none;
    border-radius: 3px;
    background-color: #178fff;
    color: #fff;
    font-size: 28px;
    letter-spacing: 0.3px;
}
.avatar {
    width: 34px;
    height: 34px;
    margin-left: auto;
    margin-right: 32px;
}

/* main area */
.main {
    flex: 1;
    display: flex;
    min-height: 0;
}
.rail {
    flex: 0 0 78px;
    display: flex;
    flex-direction: column;
    align-items: center;
    padding-top: 23px;
    background-color: #fff;
    box-shadow: 2px 0 6px rgba(0,0,0,0.08);
    z-index: 1;
}
.rail-funnel {
    width: 41px;
    height: 47px;
}
.rail-add {
    width: 46px;
    height: 46px;
    margin-top: 53px;
}
.rail-view {
    width: 50px;
    height: 44px;
    margin-top: 55px;
}
.center {
    flex: 1;
    min-width: 0;
    display: flex;
    flex-direction: column;
}
.stage {
    flex: 1;
    position: relative;
    min-height: 0;
    background-color: #f0f0f0;
}
.graph {
    position: absolute;
    left: 0;
    top: 0;
    width: 2319px;
    height: 1216px;
}
.plane {
    fill: #fff;
    stroke: #dcdcdc;
    stroke-width: 2;
}
.lines path {
    fill: none;
    stroke: #e9e9e9;
    stroke-width: 2;
}
.col-title {
    font-family: "Liberation Sans", Arial, sans-serif;
    font-size: 9.5px;
    fill: #777;
    text-anchor: middle;
}
.row-titles text {
    font-family: "Liberation Sans", Arial, sans-serif;
    font-size: 9.5px;
    fill: #8c8c8c;
    text-anchor: middle;
}
.halo {
    fill: #e4e4e4;
}
.edges path {
    fill: none;
    stroke: #a8a8a8;
    stroke-width: 1.2;
}
.edges.red path {
    stroke: #ff2a15;
}
.vm-text {
    font-family: "Liberation Sans", Arial, sans-serif;
    font-size: 6.5px;
    fill: #f0f0f0;
}

/* floating graph buttons */
.graph-tools {
    position: absolute;
    left: 1900px;
    top: 32px;
    display: flex;
    gap: 9px;
}
.btn-group {
    display: flex;
}
.tool {
    display: flex;
    align-items: center;
    justify-content: center;
    width: 76px;
    height: 64px;
    margin-left: -1px;
    border: 2px solid #dfe3e6;
    border-radius: 3px;
    background-color: #fff;
    color: #484848;
}
.tool svg {
    width: 20px;
    height: 30px;
}
.tool .tool-net {
    width: 37px;
    height: 30px;
}
.tool .tool-list {
    width: 32px;
    height: 28px;
}
.tool.active {
    position: relative;
    z-index: 1;
    border-color: #b9daf3;
    color: #0b84f3;
}
.zoom-tools {
    position: absolute;
    left: 2225px;
    top: 921px;
    width: 62px;
}
.tool.square {
    width: 62px;
    height: 63px;
    margin: 0;
}
.tool.square .ic-search {
    width: 22px;
    height: 22px;
}
.tool.square .ic-plus {
    width: 16px;
    height: 16px;
}
.tool.square .ic-fit {
    width: 19px;
    height: 19px;
}
.tool.square .ic-minus {
    width: 10px;
    height: 3px;
}
.btn-stack {
    margin-top: 10px;
}
.btn-stack .tool.square {
    margin-top: -1px;
}
.btn-stack .tool.square:first-child {
    margin-top: 0;
}
.timeline-toggle {
    position: absolute;
    left: 1100px;
    bottom: 0;
    width: 120px;
    height: 26px;
    border: none;
    border-radius: 26px 26px 0 0;
    background-color: #424242;
}
.timeline-toggle svg {
    display: block;
    width: 14px;
    height: 8px;
    margin: 0 auto;
}

/* time bar */
.time-bar {
    flex: 0 0 76px;
    display: flex;
    align-items: center;
    padding: 0 31px 0 29px;
    background-color: #424242;
}
.time-label {
    font-size: 26px;
    letter-spacing: 0.9px;
    color: #fff;
    white-space: nowrap;
}
.bar-btn {
    height: 52px;
    border: 2px solid #dfe3e6;
    border-radius: 3px;
    background-color: #fff;
    font-size: 26px;
    letter-spacing: 0.9px;
}
.bar-btn.blue {
    color: #0b84f3;
    border-color: #b9daf3;
}
.last-hour {
    width: 213px;
    margin-left: 33px;
}
.pager {
    display: flex;
    gap: 4px;
    margin-left: auto;
}
.pager-btn {
    width: 76px;
    height: 52px;
    border: none;
    border-radius: 3px;
    background-color: #fff;
}
.pager-btn svg {
    width: 8px;
    height: 20px;
    fill: #424242;
}
.pager-btn.hover {
    background-color: #dcdcdc;
}
.now-box {
    display: flex;
    margin-left: 17px;
    width: 494px;
    height: 52px;
    border-radius: 3px;
    background-color: #fff;
}
.now-date {
    flex: 0 0 295px;
    line-height: 52px;
    text-align: center;
    font-size: 28px;
    letter-spacing: 0.8px;
    padding-left: 4px;
    color: #424242;
    white-space: nowrap;
}
.live {
    flex: 1;
    font-size: 28px;
    letter-spacing: 0.8px;
}

/* timeline */
.timeline {
    flex: 0 0 223px;
    position: relative;
    display: grid;
    grid-template-columns: 190px 1960px;
    grid-auto-rows: 54px;
    padding: 29px 0 0 34px;
    background-color: #fff;
}
.tl-label {
    line-height: 54px;
    font-size: 24px;
    letter-spacing: 0.8px;
    color: #7e7e7e;
}
.tl-axis {
    display: flex;
    align-self: start;
    height: 47px;
    border-bottom: 3px solid #d2d2d2;
    width: 1956px;
}
.tick {
    flex: 0 0 326px;
    height: 44px;
    position: relative;
    border-left: 2px solid #d2d2d2;
    border-image: linear-gradient(to bottom, transparent 38px, #d2d2d2 38px) 1;
}
.tick.last {
    flex: 0 0 0;
}
.tick span {
    position: absolute;
    top: 14px;
    left: -27px;
    font-size: 21px;
    color: #6a6a6a;
}
.tl-health {
    padding: 31px 4px 0 2px;
}
.health-bar {
    height: 5px;
    background-color: #9c9c9c;
}
.tl-events {
    display: block;
    width: 1960px;
    height: 54px;
    overflow: visible;
}
.event-slots {
    fill: none;
    stroke: #e0e0e0;
    stroke-width: 4;
    stroke-dasharray: 11 5.3;
}
.event-bars rect {
    fill: #0b84f3;
}
.slider {
    position: absolute;
    left: 2137px;
    top: 6px;
    width: 87px;
    display: flex;
    flex-direction: column;
    align-items: center;
}
.slider-handle {
    display: block;
    width: 28px;
    height: 38px;
    fill: #0b84f3;
}
.slider-line {
    width: 3px;
    height: 130px;
    background-color: #0b84f3;
}
.slider-time {
    width: 87px;
    height: 38px;
    line-height: 38px;
    border-radius: 3px;
    text-align: center;
    font-size: 23px;
    color: #fff;
    background-color: #0b84f3;
}

/* right panel */
.panel {
    flex: 0 0 799px;
    position: relative;
    display: flex;
    flex-direction: column;
    height: 1515px;
    border-left: 2px solid #dcdcdc;
    background-color: #f5f5f5;
}
.panel-handle {
    position: absolute;
    left: -31px;
    top: 546px;
    width: 31px;
    height: 123px;
    display: flex;
    align-items: center;
    justify-content: center;
    border: 2px solid #dcdcdc;
    border-right: none;
    border-radius: 30px 0 0 30px;
    background-color: #f0f0f0;
    z-index: 2;
}
.panel-handle svg {
    width: 10px;
    height: 16px;
}
.panel-head {
    flex: 0 0 110px;
    display: flex;
    align-items: center;
    padding: 0 35px 0 29px;
    margin-left: -1px;
    background-color: #444;
}
.comp-icon {
    flex: 0 0 76px;
    height: 76px;
    padding: 8px;
    border-radius: 8px;
    background-color: #9a9a9a;
}
.comp-green {
    display: flex;
    align-items: center;
    justify-content: center;
    height: 100%;
    border: 3px solid #fff;
    background-color: #14d42c;
}
.comp-green svg {
    width: 40px;
    height: 40px;
}
.comp-name {
    flex: 1;
    margin: 0 0 0 20px;
    font-size: 31px;
    font-weight: 400;
    letter-spacing: 1.5px;
    color: #d8d8d8;
    white-space: nowrap;
}
.dots {
    display: flex;
    gap: 9px;
    border: none;
    background: none;
}
.dots i {
    display: block;
    width: 7px;
    height: 7px;
    border-radius: 50%;
    background-color: #555;
}
.dots.light i {
    background-color: #e6e6e6;
}
.close-x {
    width: 23px;
    height: 24px;
    margin-left: 46px;
}
.panel-scroll {
    flex: 0 0 1386px;
    overflow: hidden;
    padding: 32px 0 0 30px;
    width: 737px;
}
.section-title {
    display: flex;
    align-items: center;
    height: 50px;
    padding-left: 8px;
    font-size: 30px;
    letter-spacing: 0.8px;
    color: #333;
    white-space: nowrap;
}
.info-icon {
    width: 48px;
    height: 48px;
    margin-right: 46px;
}
.info-grid {
    display: grid;
    grid-template-columns: 230px 1fr;
    margin-top: 25px;
    font-size: 26px;
    letter-spacing: 1px;
}
.info-key {
    line-height: 56px;
    color: #999;
}
.info-val {
    line-height: 56px;
    color: #555;
}
.chips {
    display: flex;
    flex-direction: column;
    align-items: flex-start;
    gap: 10px;
    padding: 7px 0 19px;
}
.chip {
    height: 46px;
    line-height: 46px;
    padding: 0 23px;
    border-radius: 23px;
    background-color: #dcdcdc;
    color: #555;
    font-size: 25px;
    letter-spacing: 0.6px;
    white-space: nowrap;
}
.show-props {
    display: block;
    width: 705px;
    height: 78px;
    margin-top: 23px;
    border: 2px solid #dcdcdc;
    border-radius: 2px;
    background-color: #f5f5f5;
    color: #333;
    font-size: 26px;
    letter-spacing: 1.1px;
}
.sec-row {
    display: flex;
    align-items: center;
    width: 707px;
    height: 63px;
    padding-right: 7px;
}
.sec-name {
    font-size: 30px;
    letter-spacing: 1.5px;
    color: #3c3c3c;
    white-space: nowrap;
}
.health-row {
    margin-top: 82px;
    padding-left: 29px;
}
.dot-big {
    width: 40px;
    height: 40px;
    margin-right: 51px;
    border-radius: 50%;
    background-color: #12d92f;
}
.pill {
    height: 36px;
    line-height: 33px;
    margin-left: 10px;
    border-radius: 18px;
    border: 2px solid;
    text-align: center;
    font-size: 20px;
    letter-spacing: 0.8px;
}
.clear {
    width: 115px;
    border-color: #22a03c;
    background-color: #e4f6e8;
    color: #22a03c;
}
.unknown {
    width: 153px;
    border-color: #9a9a9a;
    color: #9a9a9a;
}
.add-btn {
    display: flex;
    align-items: center;
    justify-content: center;
    gap: 18px;
    width: 163px;
    height: 63px;
    margin-left: auto;
    border: 2px solid #dcdcdc;
    border-radius: 2px;
    background-color: #f5f5f5;
    color: #333;
    font-size: 26px;
    letter-spacing: 0.6px;
}
.add-btn svg {
    width: 22px;
    height: 22px;
}
.chev-up {
    width: 26px;
    height: 16px;
    margin-left: 33px;
}
.card {
    width: 707px;
    border-radius: 3px;
    background-color: #fff;
}
.check-card {
    display: flex;
    align-items: center;
    height: 109px;
    margin-top: 33px;
    padding: 0 37px 0 36px;
}
.dot-small {
    width: 22px;
    height: 22px;
    margin-right: 59px;
    border-radius: 50%;
    background-color: #12d92f;
}
.check-name {
    flex: 1;
    font-size: 27px;
    font-weight: 500;
    letter-spacing: 0.9px;
    color: #333;
}
.prop-row {
    height: 50px;
    margin-top: 54px;
    padding-left: 21px;
}
.ring {
    width: 40px;
    height: 40px;
    margin-right: 50px;
    border: 5px solid #9e9e9e;
    border-radius: 50%;
}
.tele-row {
    margin-top: 79px;
    padding-left: 25px;
}
.tele-icon {
    width: 49px;
    height: 48px;
    margin-right: 45px;
}
.stream-card {
    height: 300px;
    margin-top: 33px;
}
.stream-head {
    display: flex;
    align-items: center;
    justify-content: space-between;
    height: 110px;
    padding: 0 37px 0 93px;
    font-size: 26px;
    letter-spacing: 1px;
    color: #777;
}
.stream-chart {
    display: block;
    width: 707px;
    height: 120px;
}
.chart-grid {
    stroke: #e8e8e8;
    stroke-width: 2;
    stroke-dasharray: 8 6;
    fill: none;
}
.chart-tick {
    stroke: #ccc;
    stroke-width: 2;
}
.chart-val {
    font-size: 21px;
    letter-spacing: 0.6px;
    fill: #c0c0c0;
}
.chart-line {
    fill: none;
    stroke: #7fa4ee;
    stroke-width: 3.5;
}
.scroll-track {
    position: absolute;
    right: 0;
    top: 110px;
    bottom: 19px;
    width: 27px;
    padding: 7px 4px 0 8px;
    border-left: 2px solid #e6e6e6;
}
.scroll-thumb {
    width: 15px;
    height: 677px;
    border-radius: 8px;
    background-color: #cfcfcf;
}

/* action menu */
.action-menu {
    position: absolute;
    left: 298px;
    top: 110px;
    width: 400px;
    background-color: #fff;
    box-shadow: 0 4px 16px rgba(0,0,0,0.25);
    z-index: 3;
}
.menu-item {
    display: flex;
    align-items: center;
    gap: 29px;
    height: 96px;
    padding-left: 31px;
    font-size: 28px;
    letter-spacing: 0.6px;
    color: #222;
    fill: #222;
}
.menu-item svg {
    width: 40px;
    height: 40px;
}
.menu-item.hover {
    color: #1e90ff;
    fill: #1e90ff;
}
.hand-cursor {
    position: absolute;
    left: 281px;
    top: 251px;
    width: 30px;
    height: 34px;
}

/* tour highlight over the page */
.highlight {
    position: absolute;
    left: 2302px;
    top: 3px;
    width: 892px;
    height: 772px;
    border: 10px solid #deb03b;
    box-shadow: 0 0 0 4000px rgba(0,0,0,0.2);
    z-index: 5;
}
```
